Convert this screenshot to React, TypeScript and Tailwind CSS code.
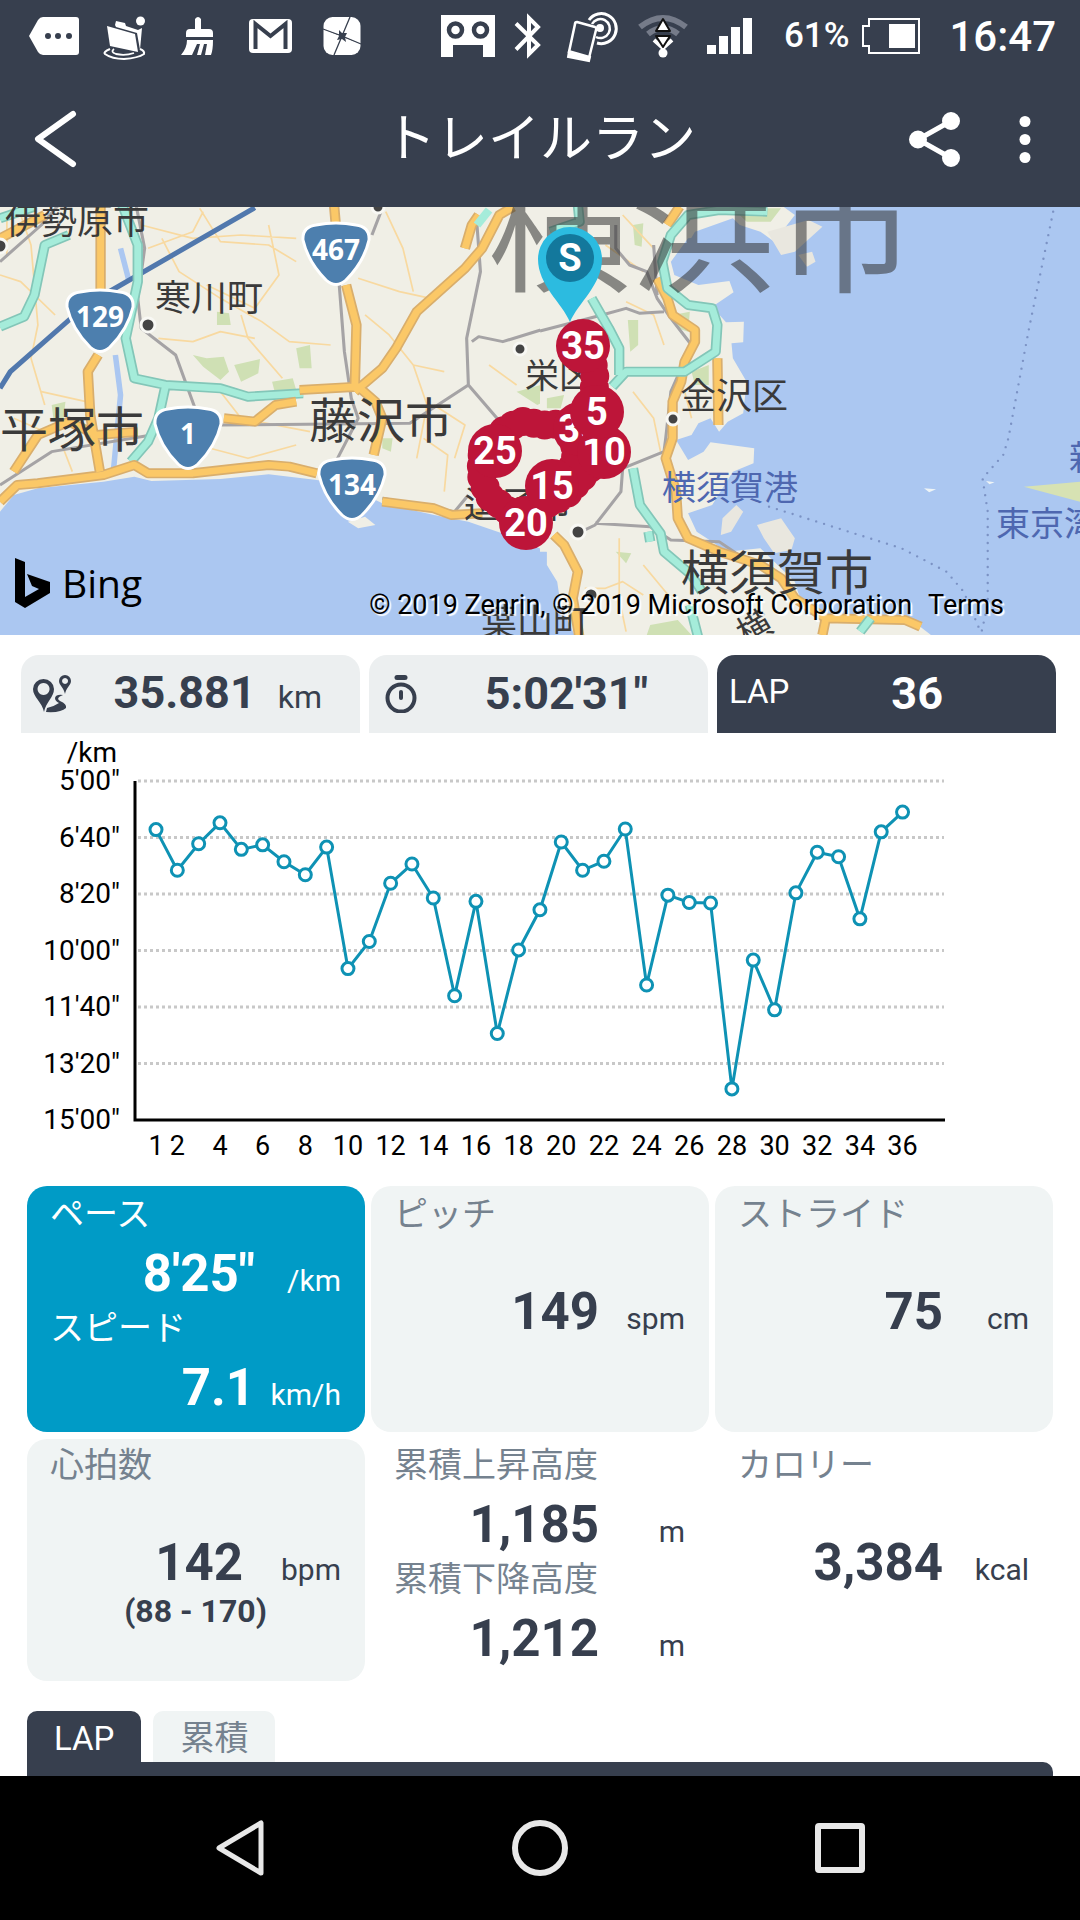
import { useState } from "react";
import clsx from "clsx";

const LAPS = [
  386, 458, 411, 374, 421, 413, 443, 466, 417, 632, 584, 481, 447, 507, 680, 513, 747, 599,
  528, 408, 458, 442, 385, 661, 502, 515, 516, 845, 617, 705, 498, 426, 434, 544, 390, 355,
];

const TICKS = [
  { sec: 300, label: "5'00\"" },
  { sec: 400, label: "6'40\"" },
  { sec: 500, label: "8'20\"" },
  { sec: 600, label: "10'00\"" },
  { sec: 700, label: "11'40\"" },
  { sec: 800, label: "13'20\"" },
  { sec: 900, label: "15'00\"" },
];

const SHIELDS = [
  { x: 336, y: 47, no: "467" },
  { x: 100, y: 114, no: "129" },
  { x: 188, y: 231, no: "1" },
  { x: 352, y: 282, no: "134" },
];

const PLACES = [
  { x: 5, y: 27, size: 36, name: "伊勢原市" },
  { x: 155, y: 104, size: 36, name: "寒川町" },
  { x: 0, y: 240, size: 48, name: "平塚市" },
  { x: 309, y: 231, size: 48, name: "藤沢市" },
  { x: 525, y: 181, size: 34, name: "栄区" },
  { x: 464, y: 311, size: 36, name: "逗子市" },
  { x: 680, y: 202, size: 36, name: "金沢区" },
  { x: 681, y: 383, size: 48, name: "横須賀市" },
  { x: 481, y: 428, size: 36, name: "葉山町" },
];

const SEA_PLACES = [
  { x: 662, y: 293, name: "横須賀港" },
  { x: 996, y: 329, name: "東京湾" },
  { x: 1069, y: 263, name: "新" },
];

const MARKERS = [
  { x: 580, y: 222, km: "30" },
  { x: 495, y: 244, km: "25" },
  { x: 526, y: 316, km: "20" },
  { x: 552, y: 279, km: "15" },
  { x: 604, y: 245, km: "10" },
  { x: 597, y: 205, km: "5" },
  { x: 583, y: 139, km: "35" },
];

function StatusBar() {
  return (
    <div className="flex h-[72px] items-center justify-between pr-6 pl-[18px] text-white">
      <div className="flex">
        <svg viewBox="0 0 72 72" className="w-[72px]" fill="#fff">
          <path d="M11 36 20 20Q22 17 25 17H58Q61 17 61 20V52Q61 55 58 55H25Q22 55 20 52Z" />
          <g fill="#373f4e">
            <circle cx="30" cy="36" r="3" />
            <circle cx="40" cy="36" r="3" />
            <circle cx="51" cy="36" r="3" />
          </g>
        </svg>
        <svg viewBox="0 0 72 72" className="w-[72px]" fill="#fff">
          <path d="M17 26 45 34 48 52 20 46Z" />
          <path d="M25 25 26 21 35 23 36 26 48 30 52 28 50 50 47 33 26 27Z" />
          <circle cx="50.500" cy="21" r="4.500" />
          <path d="M20 49Q13 52 15 54Q22 59 34 59Q48 58 54 54Q55 51 50 49" fill="none" stroke="#fff" strokeWidth="2" />
          <path d="M24 49Q20 52 26 54Q35 56 44 53" fill="none" stroke="#fff" strokeWidth="1.800" />
        </svg>
        <svg viewBox="0 0 72 72" className="w-[72px]" fill="#fff">
          <path d="M33 19Q36 15 39 19V29H47Q51 29 51 33V37H24V33Q24 29 28 29H33Z" />
          <path d="M25 40H51Q51 50 49 55H43L45 44H42L39 55H35L38 44H35L30 55H19Q25 48 25 40Z" />
        </svg>
        <svg viewBox="0 0 72 72" className="w-[72px]">
          <rect x="15" y="19" width="43" height="34" rx="4" fill="#fff" />
          <path d="M21.500 49V24L36.500 36 51.500 24V49" fill="none" stroke="#373f4e" strokeWidth="4" />
        </svg>
        <svg viewBox="0 0 72 72" className="w-[72px]">
          <rect x="17.500" y="17" width="37" height="38" rx="9" fill="#fff" />
          <path d="M44 17 36 36 28 55M17 29 36 36 55 44" stroke="#373f4e" strokeWidth="1.300" />
          <path d="M33 30 36 33 41 33 39 37 40 42 36 39 31 40 33 36Z" fill="#373f4e" />
        </svg>
      </div>
      <div className="flex items-center">
        <div className="mr-8 flex items-center gap-[19px]">
          <svg viewBox="0 0 54 72" className="w-[54px]">
            <path d="M0 15H54V57H42V45H12V57H0Z" fill="#fff" />
            <circle cx="14.500" cy="30" r="6.500" fill="none" stroke="#373f4e" strokeWidth="4.500" />
            <circle cx="39.500" cy="30" r="6.500" fill="none" stroke="#373f4e" strokeWidth="4.500" />
          </svg>
          <svg viewBox="0 0 30 72" className="w-[30px]" fill="none" stroke="#fff" strokeWidth="4">
            <path d="M2 23.500 24 45 15 54V18L24 27 2 49.500" />
          </svg>
          <svg viewBox="0 0 56 72" className="w-14" fill="none" stroke="#fff">
            <path d="M26 20A15 15 0 1 1 34 43" strokeWidth="3" />
            <path d="M29 24A9.500 9.500 0 1 1 33 37" strokeWidth="2.500" />
            <circle cx="37" cy="28" r="4" fill="#fff" stroke="none" />
            <path d="M14 22 32 27Q34 28 33 30L26 58 6 52 12 24Q12 22 14 22Z" fill="#373f4e" strokeWidth="2.500" />
            <path d="M6 51 27 57 26 61 5 57Z" fill="#fff" strokeWidth="2" />
          </svg>
          <svg viewBox="0 0 50 72" className="w-[50px]" fill="none">
            <path d="M2 27Q25 9 48 27" stroke="#757b89" strokeWidth="6" />
            <path d="M10 34Q25 22 40 34" stroke="#757b89" strokeWidth="6" />
            <path d="M16 40 25 48 34 40" stroke="#fff" strokeWidth="4" />
            <circle cx="25" cy="53" r="4.500" fill="#fff" />
            <path d="M25 19 32 31H18ZM18 36H32L25 47Z" fill="#fff" stroke="#111" strokeWidth="2" strokeLinejoin="round" />
          </svg>
          <svg viewBox="0 0 45 72" className="w-[45px]" fill="#fff">
            <path d="M0 45H9V54H0ZM12 36H21V54H12ZM24 27H33V54H24ZM36 18H45V54H36Z" />
          </svg>
        </div>
        <span className="mr-[13px] text-[35px] font-medium">61%</span>
        <svg viewBox="0 0 58 72" className="mr-[29px] w-[58px]">
          <path d="M7 19H57V53H7V46H1V26H7Z" fill="none" stroke="#fff" strokeWidth="2" />
          <path d="M27 24H53V48H27Z" fill="#fff" />
        </svg>
        <span className="text-[42px] font-medium">16:47</span>
      </div>
    </div>
  );
}

function TitleBar() {
  return (
    <div className="flex h-[135px] items-center pr-[10px] text-white">
      <div className="w-[190px]">
        <button aria-label="戻る" className="flex h-[100px] w-[110px] items-center">
          <svg viewBox="0 0 110 100" className="w-full" fill="none" stroke="#fff" strokeWidth="6" strokeLinecap="round" strokeLinejoin="round">
            <path d="M73 24 38 49 73 74" />
          </svg>
        </button>
      </div>
      <h1 className="flex-1 text-center text-[52px] leading-[64px]">トレイルラン</h1>
      <button aria-label="共有" className="h-[90px] w-[90px]">
        <svg viewBox="0 0 90 90" fill="#fff" stroke="#fff" strokeWidth="5">
          <path d="M61 26 28 44.500 61 63" fill="none" />
          <circle cx="61" cy="26" r="6.500" />
          <circle cx="28" cy="44.500" r="6.500" />
          <circle cx="61" cy="63" r="6.500" />
        </svg>
      </button>
      <button aria-label="メニュー" className="h-[90px] w-[90px]">
        <svg viewBox="0 0 90 90" fill="#fff">
          <circle cx="45" cy="26.500" r="5.500" />
          <circle cx="45" cy="44.500" r="5.500" />
          <circle cx="45" cy="62.500" r="5.500" />
        </svg>
      </button>
    </div>
  );
}

function Road({ d, color, edge, width }: { d: string; color: string; edge: string; width: number }) {
  return (
    <>
      <path d={d} stroke={edge} strokeWidth={width} />
      <path d={d} stroke={color} strokeWidth={width - 10} />
    </>
  );
}

function Highway({ d }: { d: string }) {
  return <Road d={d} color="#fbc867" edge="#d9ae6c" width={30} />;
}

function TollRoad({ d }: { d: string }) {
  return <Road d={d} color="#a5ecda" edge="#83c6b8" width={30} />;
}

function MapDrawing() {
  return (
    <svg viewBox="0 0 1080 428" className="block w-full" role="img" aria-label="コース地図">
      <rect width="1080" height="428" fill="#abc7f1" />

      {/* west half */}
      <g transform="translate(0 -2) scale(.3444 .3333)" fill="none" strokeLinejoin="round">
        <path d="M0 0H1590V1040L1500 1000 1360 950 1260 930 1110 895 1000 840 920 825 780 808 640 822 440 828 390 815 300 830 110 850 40 870 0 920Z" fill="#f0efe6" />
        <path d="M1010 950 1060 935 1090 960 1040 970Z" fill="#f0efe6" />
        <path d="M560 450 600 460 650 455 665 500 640 525 590 485ZM680 480 755 462 750 505 700 530ZM790 530 850 520 860 555 800 570ZM860 430 900 420 905 490 870 490ZM630 320 665 325 670 360 630 360ZM1110 700 1140 700 1135 740 1110 730ZM150 600 190 590 185 640 155 640ZM1500 560 1570 540 1600 580 1560 600Z" fill="#cfe0b4" />
        <path d="M350 130 375 230M335 450 350 570 330 790" stroke="#abc7f1" strokeWidth="16" />
        <g stroke="#f8d9a0" strokeWidth="5">
          <path d="M50 0 90 120 110 360 90 460 130 600M0 210 60 230 160 330M120 560 250 590M410 60 560 100 700 90 860 100M430 130 560 80 590 20M470 100 520 200 640 280 760 350 840 410 960 420M580 10 640 110 780 120 860 170M780 60 810 210 740 310 600 240M700 330 720 400 820 520M460 400 560 410 640 380 740 400M640 560 700 640 900 680M1040 220 1160 260 1250 280M1060 330 1130 390 1200 480 1290 500M1120 20 1170 130 1200 260M1200 480 1240 600 1210 760M1260 600 1350 660 1320 760M500 700 720 760 860 720M180 720 210 800M40 640 130 680M1230 700 1300 750 1290 860M1420 480 1500 540M470 620 560 690M20 20 20 150" />
        </g>
        <g stroke="#a5a3a5" strokeWidth="9">
          <path d="M395 0 420 130 400 280 410 370 510 450 570 620M1110 10 1080 90M985 240 1000 440 1020 580 1040 640 980 760M0 840 150 740 440 690M640 660 1190 655 1360 540 1355 400 1395 200 1385 60M1360 540 1460 660M1370 410 1390 395 1460 410 1570 375M0 170 120 60 170 0M1360 870 1320 920 1210 900 1110 880" />
        </g>
        <path d="M0 550 30 500 250 300 740 8" stroke="#5178ad" strokeWidth="15" />
        <TollRoad d="M0 365 70 335 100 270 130 120 200 90M0 40 100 5M355 0 400 120 400 230 365 400 390 520 480 540 640 550 720 575 880 565M480 545 460 640 430 710 380 770" />
        <Highway d="M0 100 130 30M292 0 292 270M285 450 255 500 262 630 290 800M970 0 975 60M1005 240 1035 360 1030 550M1030 560 1110 490 1150 430 1210 320 1350 190 1400 130 1450 30 1490 5M1350 130 1370 60 1390 30M870 555 1040 545 1090 590 1110 640 1085 750M650 640 740 650 800 600 860 590M40 800 110 690 200 650 280 690 400 680M0 890 50 840 110 835 300 810 390 780 430 805 560 805 690 790 780 780 840 785 920 805M1110 890 1260 910 1310 930 1400 925" />
        <path d="M1385 60 1420 15" stroke="#a5ecda" strokeWidth="24" />
      </g>

      {/* east half */}
      <g transform="translate(540 -2) scale(.3444 .3333)" fill="none" strokeLinejoin="round">
        <path d="M0 0H700L740 30 680 110 640 80 580 60 520 90 430 100 380 170 390 210 460 240 550 228 562 262 500 305 540 352 592 350 590 412 556 415 560 460 600 530 590 625 545 650 520 680 495 640 460 655 440 690 395 705 430 765 475 740 495 712 622 730 620 775 560 800 500 900 430 925 455 980 500 1010 540 1040 640 1030 740 1130 770 1230 1060 1230 1160 1310H50L100 1290 60 1200 50 1130 20 1080 20 1040 0 1040Z" fill="#f0efe6" />
        <path d="M660 80 780 45 820 65 740 140 700 150ZM750 150 790 140 800 170 775 185ZM530 940 570 900 590 920 555 980 525 990ZM630 960 700 940 740 1000 730 1035 680 1045 650 1000Z" fill="#e9e7df" />
        <path d="M560 40 450 80 410 150 440 170 480 120 530 90 590 70Z" fill="#abc7f1" />
        <path d="M1405 845 1568 830V890Z" fill="#d7e2b3" />
        <path d="M1115 850 1150 853 1130 862ZM1295 828 1320 832 1305 838Z" fill="#eef4f6" />
        <path d="M270 60 300 55 295 125 275 120ZM255 345 285 345 285 420 262 440ZM385 330 435 320 430 380 400 370ZM440 500 490 480 490 540 450 540ZM20 580 70 570 60 610 20 610ZM220 1040 265 1045 250 1075ZM320 1260 400 1245 440 1290H310ZM560 10 700 10 670 50 600 50Z" fill="#cfe0b4" />
        <g stroke="#f8d9a0" strokeWidth="5">
          <path d="M190 120 300 200M20 120 60 300M240 30 330 130M250 290 330 330 360 420M130 1150 190 1150 240 1130 300 1170M230 1000 230 1180 250 1280M270 560 330 640 350 740M420 560 440 640M300 1080 380 1180" />
        </g>
        <g stroke="#a5a3a5" strokeWidth="9">
          <path d="M0 378 180 330 250 310 290 325 360 320M220 60 220 130 260 180 310 200 340 280 380 340 440 420 380 560 365 700 360 740 240 790 235 860 160 960 120 980M160 955 320 965 380 1005 520 1010 620 1080M330 120 340 270" />
        </g>
        <Highway d="M405 5 370 60M340 220 370 280 385 330 450 375 450 410 420 470 410 530 385 590 385 700 365 760 395 860 400 940 430 1000 520 1040 640 1080 700 1120 740 1180 830 1240 1060 1245 1105 1265M515 460 518 660M40 990 70 1020 110 1100 95 1180 115 1300M820 1290 830 1240" />
        <TollRoad d="M110 0 115 50 30 80M660 20 520 15 430 30 380 90 355 170 370 250 430 300 500 310 515 360 510 440 420 500 250 500 210 545M150 280 200 370 230 430 230 510M270 790 290 900 350 985 360 1040 440 1110 470 1160M315 980 320 1010M435 1200 460 1300M930 1280 960 1240" />
        <g stroke="#7b92c4" strokeWidth="7" strokeDasharray="0 24" strokeLinecap="round">
          <path d="M1490 20 1420 370 1360 700 1345 750 1285 820 1300 920 1300 1200 1280 1290" />
          <path d="M665 905 850 965 1050 1030 1180 1100 1230 1160 1275 1270" />
        </g>
      </g>

      <g fill="#444" stroke="#f8f8f4" strokeWidth="3">
        <circle cx="148" cy="118" r="7" />
        <circle cx="0" cy="39" r="7" />
        <circle cx="378" cy="0" r="6" />
        <circle cx="520" cy="142" r="6" />
        <circle cx="673" cy="212" r="6" />
        <circle cx="578" cy="325" r="7" />
        <circle cx="591" cy="388" r="7" />
      </g>

      <g fontFamily="'Noto Sans CJK JP', sans-serif">
        <text x="488" y="74" fontSize="143" fill="#333" opacity=".55">横浜市</text>
        <g fill="#3a3a3a">
          {PLACES.map((p) => (
            <text key={p.name} x={p.x} y={p.y} fontSize={p.size}>{p.name}</text>
          ))}
          <text x="738" y="438" fontSize="34" transform="rotate(-30 745 425)">横</text>
        </g>
        <g fill="#4e67b0" fontSize="34">
          {SEA_PLACES.map((p) => (
            <text key={p.name} x={p.x} y={p.y}>{p.name}</text>
          ))}
        </g>
      </g>

      <g textAnchor="middle" fontFamily="'Open Sans', sans-serif" fontWeight="700" fontSize="28" fill="#fff">
        {SHIELDS.map((s) => (
          <g key={s.no} transform={`translate(${s.x} ${s.y})`}>
            <path d="M-20-29Q0-33 20-29 34-27 33-14 28 8 10 26 0 35-10 26-28 8-33-14-34-27-20-29Z" fill="#4d7fae" stroke="#fff" strokeWidth="3" />
            <text y="6">{s.no}</text>
          </g>
        ))}
      </g>

      <path
        d="M583 139 595 162 594 190 600 210 604 246 584 268 566 288 540 300 526 317M597 205 575 216 545 218 520 214 500 226 481 250 482 274 490 290 508 304M574 228 576 256 552 279"
        fill="none" stroke="#bd1539" strokeWidth="29" strokeDasharray="0 11" strokeLinecap="round" strokeLinejoin="round"
      />
      <g textAnchor="middle" fontFamily="Roboto, sans-serif" fontWeight="700" fontSize="38">
        {MARKERS.map((m) => (
          <g key={m.km}>
            <circle cx={m.x} cy={m.y} r="27" fill="#bd1539" />
            <text x={m.x} y={m.y + 13} fill="#fff">{m.km}</text>
          </g>
        ))}
        <path d="M570 115C562 96 538 78 538 52A32 32 0 0 1 602 52C602 78 578 96 570 115Z" fill="#2cbbe0" />
        <circle cx="570" cy="51" r="24" fill="#13789c" />
        <text x="570" y="64" fill="#fff">S</text>
      </g>
    </svg>
  );
}

function CourseMap() {
  return (
    <div className="relative overflow-hidden">
      <MapDrawing />
      <div className="absolute bottom-6 left-[15px] flex items-center gap-3 text-black">
        <svg viewBox="0 0 35 50" className="w-[35px]">
          <path d="M0 0 10 4V39L24 31 17 28 12 16 35 24V35L10 50 0 44Z" />
        </svg>
        <span className="font-['Open_Sans'] text-[39px] leading-[56px]">Bing</span>
      </div>
      <div className="absolute right-[76px] bottom-[14px] flex gap-4 text-[27px] leading-[32px] whitespace-nowrap text-black [text-shadow:2px_2px_1px_#fff]">
        <span>© 2019 Zenrin, © 2019 Microsoft Corporation</span>
        <a href="#terms">Terms</a>
      </div>
    </div>
  );
}

function SummaryTabs() {
  const tab = "flex h-[78px] items-center justify-between rounded-t-[18px] text-[#373f4e]";
  return (
    <div className="grid grid-cols-3 gap-[9px] pt-5 pr-6 pl-[21px]">
      <button className={clsx(tab, "bg-[#eceff0] pr-[38px] pl-3")}>
        <svg viewBox="0 0 38 38" className="w-[38px]" fill="#373f4e">
          <path fillRule="evenodd" d="M11 37C9 27 0 22 0 14A10.500 10 0 0 1 21 14C21 22 13 27 11 37ZM10.500 8A6 6 0 1 0 10.600 8Z" />
          <path fillRule="evenodd" d="M32 19C31 13 26 10 26 6A6 6 0 0 1 38 6C38 10 33 13 32 19ZM32 3A3 3 0 1 0 32.100 3Z" />
          <path d="M30 20Q23 19 22 23 22 26 26 28 20 32 14 33L13 37Q28 38 33 33 34 29 27 26 22 23 30 20Z" />
        </svg>
        <span className="flex items-baseline gap-[22px]">
          <b className="text-[45px] leading-[52px]">35.881</b>
          <span className="text-[32px]">km</span>
        </span>
      </button>
      <button className={clsx(tab, "bg-[#eceff0] pr-[60px] pl-4")}>
        <svg viewBox="0 0 32 38" className="w-8" fill="none" stroke="#373f4e" strokeLinecap="round">
          <circle cx="16" cy="23" r="13.500" strokeWidth="4" />
          <path d="M12 2.500H20" strokeWidth="5" />
          <path d="M16 17V23" strokeWidth="4" />
        </svg>
        <b className="text-[45px] leading-[52px]">5:02'31"</b>
      </button>
      <button className={clsx(tab, "bg-[#373f4e] pr-[113px] pb-1 pl-3 text-white")}>
        <span className="text-[33px]">LAP</span>
        <b className="pt-1 text-[45px] leading-[52px]">36</b>
      </button>
    </div>
  );
}

function PaceChart() {
  const px = (i: number) => 156 + i * 21.33;
  const py = (sec: number) => 48 + ((sec - 300) * 339) / 600;
  const xTicks = [1, ...Array.from({ length: 18 }, (_, i) => (i + 1) * 2)];

  return (
    <svg viewBox="0 0 1080 453" className="block w-full" role="img" aria-label="ペース">
      <g fontSize="28" textAnchor="end">
        <text x="117" y="29">/km</text>
        {TICKS.map((t) => (
          <text key={t.sec} x="120" y={py(t.sec) + 9}>{t.label}</text>
        ))}
      </g>
      {TICKS.slice(0, -1).map((t) => (
        <path key={t.sec} d={`M138 ${py(t.sec)}H944`} stroke="#c8c8c8" strokeWidth="3" strokeDasharray="3 3" />
      ))}
      <path d={`M135 48V${py(900)}H945`} fill="none" stroke="#000" strokeWidth="3" />
      <g fontSize="27" textAnchor="middle">
        {xTicks.map((n) => (
          <text key={n} x={px(n - 1)} y="422">{n}</text>
        ))}
      </g>
      <polyline points={LAPS.map((s, i) => `${px(i)},${py(s)}`).join(" ")} fill="none" stroke="#0e92b4" strokeWidth="3" />
      {LAPS.map((s, i) => (
        <circle key={i} cx={px(i)} cy={py(s)} r="6" fill="#fff" stroke="#0e92b4" strokeWidth="3" />
      ))}
    </svg>
  );
}

type StatProps = { label: string; value: string; unit: string; tall?: boolean; wideUnit?: boolean };

function Stat({ label, value, unit, tall, wideUnit }: StatProps) {
  return (
    <span className="block pt-1">
      <span className="block h-11 text-[34px] leading-[44px]">{label}</span>
      <span className={clsx("flex items-baseline justify-end", tall ? "h-[104px] pt-[50px]" : "h-[66px] pt-3")}>
        <b className="text-[51px] leading-[52px] text-(--value)">{value}</b>
        <span className={clsx("text-right text-[30px] leading-[52px] text-(--value)", wideUnit ? "w-[98px]" : "w-[86px]")}>
          {unit}
        </span>
      </span>
    </span>
  );
}

function Metrics() {
  const card = "flex flex-col items-stretch justify-start rounded-[20px] pr-6 pl-[23px] text-left";
  const plain = "text-[#75828f] [--value:#373f4e]";
  const gray = "bg-[#f0f4f4]";
  return (
    <div className="grid grid-cols-3 gap-x-[6px] gap-y-[7px] px-[27px]">
      <button className={clsx(card, "h-[246px] bg-[#009bc6] pt-[2px] text-white [--value:#fff]")}>
        <Stat label="ペース" value={"8'25\""} unit="/km" />
        <Stat label="スピード" value="7.1" unit="km/h" />
      </button>
      <button className={clsx(card, plain, gray, "h-[246px] pt-[2px]")}>
        <Stat label="ピッチ" value="149" unit="spm" tall />
      </button>
      <button className={clsx(card, plain, gray, "h-[246px] pt-[2px]")}>
        <Stat label="ストライド" value="75" unit="cm" tall />
      </button>
      <button className={clsx(card, plain, gray, "h-[242px]")}>
        <Stat label="心拍数" value="142" unit="bpm" tall wideUnit />
        <b className="text-center text-[32px] leading-[40px] text-(--value)">(88 - 170)</b>
      </button>
      <div className={clsx(card, plain)}>
        <Stat label="累積上昇高度" value="1,185" unit="m" />
        <Stat label="累積下降高度" value="1,212" unit="m" />
      </div>
      <div className={clsx(card, plain)}>
        <Stat label="カロリー" value="3,384" unit="kcal" tall />
      </div>
    </div>
  );
}

function LapTable() {
  const [tab, setTab] = useState("LAP");
  return (
    <div className="mt-[30px] flex flex-1 flex-col px-[27px]">
      <div className="flex gap-3">
        {["LAP", "累積"].map((name) => (
          <button
            key={name}
            onClick={() => setTab(name)}
            className={clsx(
              "h-[51px] rounded-t-[10px] px-[27px] pt-1 leading-[47px]",
              tab === name ? "bg-[#373f4e] text-[33px] text-white" : "bg-[#f0f4f4] text-[34px] text-[#75828f]"
            )}
          >
            {name}
          </button>
        ))}
      </div>
      <div className="flex-1 rounded-tr-[10px] bg-[#373f4e]" />
    </div>
  );
}

function NavBar() {
  return (
    <nav className="grid h-36 grid-cols-3 items-center justify-items-center bg-black px-[90px]">
      <button aria-label="Back">
        <svg viewBox="0 0 60 60" className="w-[60px]" fill="none" stroke="#e8e8e8" strokeWidth="5" strokeLinejoin="round">
          <path d="M51 5V55L9 30Z" />
        </svg>
      </button>
      <button aria-label="Home">
        <svg viewBox="0 0 60 60" className="w-[60px]" fill="none" stroke="#e8e8e8" strokeWidth="6">
          <circle cx="30" cy="30" r="25" />
        </svg>
      </button>
      <button aria-label="Recents">
        <svg viewBox="0 0 60 60" className="w-[60px]" fill="none" stroke="#e8e8e8" strokeWidth="6">
          <rect x="8" y="8" width="44" height="44" rx="1" />
        </svg>
      </button>
    </nav>
  );
}

export default function App() {
  return (
    <div className="flex min-h-screen flex-col bg-white font-[Roboto,'Noto_Sans_CJK_JP',sans-serif]">
      <header className="bg-[#373f4e]">
        <StatusBar />
        <TitleBar />
      </header>
      <main className="flex flex-1 flex-col">
        <CourseMap />
        <SummaryTabs />
        <PaceChart />
        <Metrics />
        <LapTable />
      </main>
      <NavBar />
    </div>
  );
}
